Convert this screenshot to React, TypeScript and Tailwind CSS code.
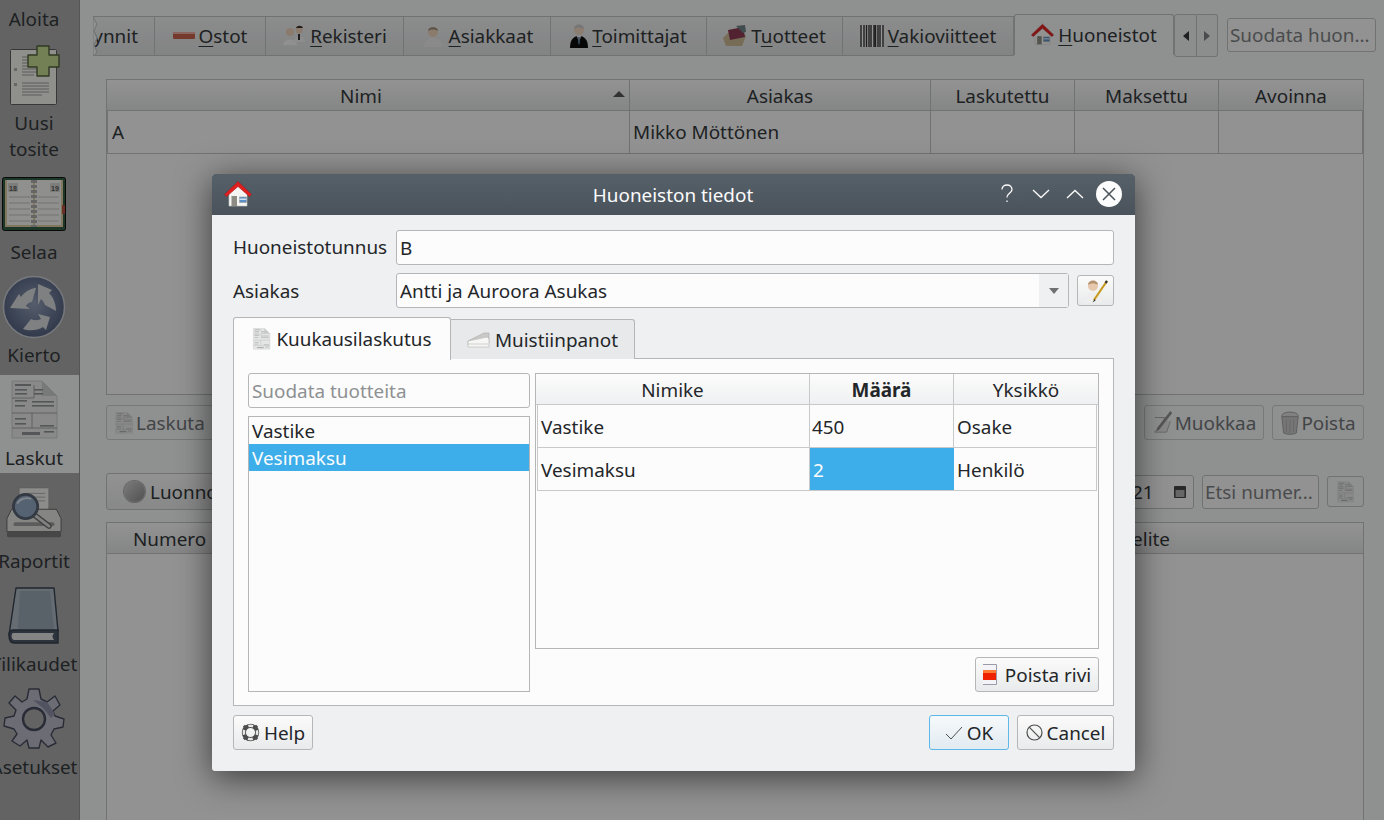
import type { ReactNode } from 'react';

const ink = 'text-[#232629]';

function HouseIcon({ size = 28 }: { size?: number }) {
  return (
    <svg width={size} height={size} viewBox="0 0 28 28">
      <path d="M5 13 V26 H23 V13 L14 5 Z" fill="#f4f4f2" stroke="#c9c9c5" strokeWidth="0.6" />
      <path d="M0.5 14.5 L14 1.5 L27.5 14.5 L25.5 16.5 L14 6.5 L2.5 16.5 Z" fill="#e02020" stroke="#a81414" strokeWidth="0.6" />
      <rect x="7.5" y="16" width="5.5" height="10" fill="#8c8c84" />
      <rect x="15.5" y="17" width="7" height="5.5" fill="#5b8fc4" stroke="#9a9a9a" strokeWidth="0.6" />
      <rect x="15.5" y="18.5" width="7" height="1.5" fill="#cfe0f2" />
    </svg>
  );
}

function InvoiceIcon({ w = 20, h = 24, c = '#8e9092' }: { w?: number; h?: number; c?: string }) {
  return (
    <svg width={w} height={h} viewBox="0 0 48 60">
      <path d="M2 1 H32 L47 16 V58 H2 Z" fill="#e4e5e5" stroke="#c8c8c8" strokeWidth="1" />
      <path d="M32 1 V16 H47 Z" fill="#c9caca" />
      <g fill={c}>
        <rect x="5" y="4" width="16" height="2" />
        <rect x="5" y="9" width="12" height="1.6" />
        <rect x="5" y="13" width="12" height="1.6" />
        <rect x="24" y="9" width="9" height="1.6" />
        <rect x="24" y="13" width="9" height="1.6" />
        <rect x="5" y="20" width="12" height="1.6" />
        <rect x="22" y="21" width="22" height="1.6" />
        <rect x="22" y="25" width="22" height="1.6" />
        <rect x="5" y="25" width="10" height="1.6" />
        <rect x="5" y="38" width="11" height="1.6" />
        <rect x="5" y="43" width="11" height="1.6" />
        <rect x="30" y="45" width="14" height="1.6" />
        <rect x="12" y="52" width="18" height="3" />
        <rect x="34" y="51" width="10" height="1.6" />
      </g>
      <path d="M2 33 H47 M2 48 H47 M22 33 V48 M24 5 V18 H2" fill="none" stroke={c} strokeWidth="0.8" />
    </svg>
  );
}

function NewDocIcon() {
  return (
    <svg width="50" height="60" viewBox="0 0 50 60">
      <rect x="0.5" y="4.5" width="46" height="55" rx="1" fill="#eeeeea" stroke="#5c5c5c" strokeWidth="1" />
      <g stroke="#9a9a9a" strokeWidth="1">
        <path d="M12 12 H18 M12 15 H18 M12 18 H18 M12 21 H18 M12 24 H30 M12 27 H30 M12 30 H24" />
        <path d="M12 38 H39 M12 41 H39 M12 44 H39 M12 47 H39 M12 50 H32" />
      </g>
      <rect x="4" y="23" width="3" height="3" fill="#aaa" />
      <rect x="4" y="38" width="3" height="3" fill="#aaa" />
      <path d="M27 1 H39 V10 H49 V22 H39 V31 H27 V22 H18 V10 H27 Z" fill="#c0d48e" stroke="#50603a" strokeWidth="1.4" strokeLinejoin="round" />
    </svg>
  );
}

function PlannerIcon() {
  return (
    <svg width="64" height="54" viewBox="0 0 64 54">
      <rect x="0.5" y="0.5" width="63" height="53" rx="2" fill="#2f5c44" stroke="#111" />
      <rect x="3" y="3" width="58" height="47" fill="#d8c79d" />
      <rect x="5" y="3" width="26" height="45" fill="#f0f0ee" />
      <rect x="33" y="3" width="26" height="45" fill="#eeeeec" />
      <rect x="6" y="6" width="10" height="9" fill="#d0d0ce" />
      <rect x="48" y="6" width="10" height="9" fill="#d0d0ce" />
      <text x="11" y="13.5" fontSize="7" textAnchor="middle" fill="#555" fontFamily="Liberation Sans" fontWeight="700">18</text>
      <text x="53" y="13.5" fontSize="7" textAnchor="middle" fill="#555" fontFamily="Liberation Sans" fontWeight="700">19</text>
      <g stroke="#c0c0be" strokeWidth="1">
        <path d="M7 20 H28 M7 26 H28 M7 32 H28 M7 38 H28 M7 44 H28 M36 20 H57 M36 26 H57 M36 32 H57 M36 38 H57 M36 44 H57" />
      </g>
      <path d="M32 3 V50" stroke="#aaa" strokeWidth="6" strokeDasharray="3 2" />
      <rect x="60" y="28" width="3" height="9" fill="#b05040" />
    </svg>
  );
}

function CycleIcon() {
  return (
    <svg width="64" height="64" viewBox="0 0 64 64">
      <defs>
        <radialGradient id="cy" cx="0.5" cy="0.45" r="0.6">
          <stop offset="0" stopColor="#8f9cb5" />
          <stop offset="1" stopColor="#4c5a78" />
        </radialGradient>
      </defs>
      <circle cx="32" cy="32" r="30.5" fill="url(#cy)" stroke="#c5c9d0" strokeWidth="1.5" />
      <g fill="#d4d6d8">
        <path d="M8 33 L17 19 L19 22 C24 15 31 13 34 13 L30 27 C27 27 25 29 24 31 L28 34 Z" />
        <path d="M36 9 L50 15 L47 18 C52 23 54 30 54 36 L43 30 C42 27 40 25 39 24 L36 30 Z" />
        <path d="M48 42 L44 55 L41 52 C35 56 27 56 21 54 L29 44 C33 46 37 45 39 44 L36 39 Z" />
      </g>
    </svg>
  );
}

function PrinterIcon() {
  return (
    <svg width="56" height="56" viewBox="0 0 60 56">
      <rect x="14" y="1" width="32" height="30" fill="#e9e9e7" stroke="#999" />
      <path d="M22 7 H42 M22 11 H42 M34 15 H42" stroke="#aaa" />
      <path d="M6 24 H54 L59 34 V48 H1 V34 Z" fill="#dededc" stroke="#5c5c5c" />
      <rect x="1" y="48" width="58" height="6" rx="2" fill="#777" />
      <rect x="8" y="38" width="44" height="4" rx="2" fill="#999" />
      <path d="M29 29 L46 42" stroke="#6b6b6b" strokeWidth="6" strokeLinecap="round" />
      <path d="M29 29 L46 42" stroke="#d8d8d8" strokeWidth="3" strokeLinecap="round" />
      <circle cx="21" cy="21" r="13" fill="#8ea3bf" stroke="#55606e" strokeWidth="3" />
      <path d="M12 18 C15 12 22 11 27 13" stroke="#d5dfea" strokeWidth="2" fill="none" />
    </svg>
  );
}

function BookIcon() {
  return (
    <svg width="52" height="58" viewBox="0 0 52 58">
      <path d="M8 1 H46 L50 44 H4 C2 44 1 46 1 48 Z" fill="#a9b4bf" stroke="#35404e" strokeWidth="1.4" strokeLinejoin="round" />
      <path d="M12 4 H42 L46 42 H10 Z" fill="#97a4b0" />
      <path d="M1 48 C1 44 3 43 6 43 H50 L50 56 H6 C3 56 1 53 1 48 Z" fill="#4a5566" stroke="#35404e" strokeWidth="1.4" />
      <path d="M5 46 H46 C44 49 44 50 46 53 H6 C3 52 3 47 5 46 Z" fill="#dcdcdc" />
    </svg>
  );
}

function GearIcon() {
  return (
    <svg width="62" height="62" viewBox="0 0 62 62">
      <path
        d="M26 1 H36 L38 11 L44 14 L52 8 L57 17 L50 23 L52 28 L61 31 L60 39 L51 41 L48 47 L53 55 L45 59 L38 52 L36 60 H26 L24 52 L17 58 L9 53 L14 46 L11 41 L1 38 L2 30 L11 28 L13 22 L6 15 L12 8 L19 14 L24 11 Z"
        fill="#b2b5c2"
        stroke="#45495a"
        strokeWidth="1.4"
        strokeLinejoin="round"
      />
      <circle cx="31" cy="31" r="11" fill="#a6a6a6" stroke="#45495a" strokeWidth="2.4" />
      <path d="M30 12 L40 20 L48 30 L52 26 L44 14 Z" fill="#878ba0" />
    </svg>
  );
}

function PersonIcon({ size = 24, suit = '#e6e6e6' }: { size?: number; suit?: string }) {
  return (
    <svg width={size} height={size} viewBox="0 0 24 24">
      <circle cx="12" cy="8" r="5" fill="#e6cdb6" />
      <path d="M7 7 C7 2 17 2 17 7 C15 5 9 5 7 7 Z" fill="#9a8a78" />
      <path d="M3 23 C3 16 8 14 12 14 C16 14 21 16 21 23 Z" fill={suit} />
    </svg>
  );
}

function TabIcon({ name }: { name: string }) {
  if (name === 'minus') {
    return (
      <svg width="22" height="8" viewBox="0 0 22 8">
        <rect x="0" y="0" width="22" height="7" rx="1" fill="#c4614c" />
        <rect x="0" y="0" width="22" height="2" fill="#e8aaa0" />
      </svg>
    );
  }
  if (name === 'people') {
    return (
      <svg width="24" height="22" viewBox="0 0 24 22">
        <circle cx="8" cy="7" r="4" fill="#e6cdb6" />
        <path d="M1 20 C1 13 15 13 15 20 Z" fill="#f0f0f0" />
        <circle cx="17" cy="5" r="3.5" fill="#e6cdb6" />
        <path d="M14 3 C15 0 20 0 21 3 Z" fill="#3a2f28" />
        <path d="M12 17 C12 10 23 10 23 17 Z" fill="#ececec" />
        <rect x="16" y="9" width="2" height="6" fill="#333" />
      </svg>
    );
  }
  if (name === 'person') return <PersonIcon size={24} />;
  if (name === 'suit') {
    return (
      <svg width="18" height="24" viewBox="0 0 18 24">
        <circle cx="9" cy="6" r="5" fill="#e8d0ba" />
        <path d="M4 5 C4 -1 14 -1 14 5 C12 3 6 3 4 5 Z" fill="#c5c5c5" />
        <path d="M0 24 C0 15 4 12 9 12 C14 12 18 15 18 24 Z" fill="#0c0c0c" />
        <path d="M7 12 L9 19 L11 12 Z" fill="#f0f0f0" />
        <path d="M8.4 13 H9.6 L10 19 L9 21 L8 19 Z" fill="#50708a" />
      </svg>
    );
  }
  if (name === 'books') {
    return (
      <svg width="24" height="22" viewBox="0 0 24 22">
        <path d="M0 13 L5 8 H20 L23 11 L19 21 H3 Z" fill="#c7b48f" />
        <path d="M5 5 L20 2 L22 12 L7 15 Z" fill="#8a3a52" />
        <path d="M13 1 L22 0 L23 7 L20 8 Z" fill="#6c7f80" />
      </svg>
    );
  }
  if (name === 'barcode') {
    return (
      <svg width="24" height="22" viewBox="0 0 24 22">
        <rect width="24" height="22" fill="#f6f6f6" />
        <path d="M1 0 V22 M4 0 V22 M6.5 0 V22 M9 0 V22 M11 0 V22 M14 0 V22 M15.5 0 V22 M18 0 V22 M20 0 V22 M23 0 V22" stroke="#333" strokeWidth="1.4" />
      </svg>
    );
  }
  return <HouseIcon size={23} />;
}

function Tab({ w, icon, pre, mn, post, active }: { w: number; icon?: string; pre?: string; mn: string; post: string; active?: boolean }) {
  return (
    <div
      style={{ width: w }}
      className={
        active
          ? 'flex h-[41px] -mt-[2px] items-center justify-center gap-[4px] rounded-t-[3px] border border-b-0 border-[#bcbebf] bg-[#eff0f1] pb-[1px]'
          : 'flex h-[40px] items-center justify-center gap-[4px] border-y border-r border-[#bcbebf] bg-gradient-to-b from-[#e9eaeb] to-[#dadbdc]'
      }
    >
      {icon && <TabIcon name={icon} />}
      <span className="text-[#33373a]">
        {pre}
        <span className="underline decoration-1 underline-offset-[3px]">{mn}</span>
        {post}
      </span>
    </div>
  );
}

function BackgroundHeader({ label, w, sorted }: { label: string; w: number; sorted?: boolean }) {
  return (
    <div style={{ width: w }} className={`relative flex h-full items-center justify-center border-r border-[#bcbebf] pt-[1px] last:border-r-0 ${sorted ? 'pr-[14px]' : ''}`}>
      <span className="text-[#33373a]">{label}</span>
      {sorted && <span className="absolute right-[4px] top-[11px] h-0 w-0 border-x-[6px] border-b-[6px] border-x-transparent border-b-[#555]" />}
    </div>
  );
}

function DisabledButton({ w, left, children }: { w: number; left?: boolean; children: ReactNode }) {
  return (
    <div
      style={{ width: w }}
      className={`flex h-[35px] items-center gap-[1px] rounded-[3px] border border-[#c8c9ca] bg-[#eff0f1] text-[#6f7376] ${left ? 'justify-start pl-[8px]' : 'justify-center'}`}
    >
      {children}
    </div>
  );
}

function SideItem({ label, icon, active, className }: { label: string; icon: ReactNode; active?: boolean; className: string }) {
  return (
    <div className={`w-full pt-[3px] ${className} ${active ? 'bg-[#eff0f1]' : ''}`}>
      <div className="flex w-[68px] flex-col items-center">
        <div className="flex h-[64px] items-center justify-center">{icon}</div>
        <div className="mt-[3px] flex w-[68px] justify-center whitespace-nowrap leading-[26px] text-[#33373a]">{label}</div>
      </div>
    </div>
  );
}

function Background() {
  return (
    <div className="flex h-full w-full">
      <aside className="flex h-full w-[80px] shrink-0 flex-col overflow-hidden border-r border-[#909090] bg-[#a6a6a6]">
        <div className="flex h-[38px] w-[68px] shrink-0 items-center justify-center leading-[26px] text-[#33373a]">Aloita</div>
        <div className="flex h-[131px] w-[68px] shrink-0 flex-col items-center">
          <div className="flex h-[72px] items-center justify-center pl-[1px] pt-[1px]">
            <NewDocIcon />
          </div>
          <div className="text-center leading-[26px] text-[#33373a]">
            Uusi
            <br />
            tosite
          </div>
        </div>
        <SideItem className="h-[103px] shrink-0" label="Selaa" icon={<PlannerIcon />} />
        <SideItem className="h-[103px] shrink-0" label="Kierto" icon={<CycleIcon />} />
        <SideItem className="h-[98px] shrink-0" label="Laskut" active icon={<InvoiceIcon w={48} h={60} />} />
        <SideItem className="mt-[5px] h-[103px] shrink-0" label="Raportit" icon={<PrinterIcon />} />
        <SideItem className="h-[103px] shrink-0" label="Tilikaudet" icon={<BookIcon />} />
        <SideItem className="h-[103px] shrink-0" label="Asetukset" icon={<GearIcon />} />
      </aside>

      <main className="flex min-w-0 flex-1 flex-col bg-[#eff0f1]">
        <div className="flex h-[79px] shrink-0 items-start pl-[13px] pt-[16px]">
          <div className="relative flex h-[40px] w-[62px] items-center justify-end overflow-hidden border-y border-r border-[#bcbebf] bg-gradient-to-b from-[#e9eaeb] to-[#dadbdc] pr-[16px] text-[#33373a]">
            ynnit
            <svg className="absolute left-0 top-0" width="5" height="40" viewBox="0 0 5 40" fill="#eff0f1" stroke="#bcbebf">
              <path d="M0 0 L4 7 L1 14 L4 21 L1 28 L4 35 L0 40 Z" />
            </svg>
          </div>
          <Tab w={111} icon="minus" mn="O" post="stot" />
          <Tab w={138} icon="people" mn="R" post="ekisteri" />
          <Tab w={147} icon="person" mn="A" post="siakkaat" />
          <Tab w={156} icon="suit" mn="T" post="oimittajat" />
          <Tab w={136} icon="books" pre="T" mn="u" post="otteet" />
          <Tab w={171} icon="barcode" mn="V" post="akioviitteet" />
          <Tab w={160} icon="house" mn="H" post="uoneistot" active />
          <div className="-mt-[2px] flex h-[43px]">
            <div className="flex w-[23px] items-center justify-center rounded-l-[3px] border border-[#bcbebf] bg-[#eaebec]">
              <span className="h-0 w-0 border-y-[5px] border-r-[6px] border-y-transparent border-r-[#33373a]" />
            </div>
            <div className="flex w-[21px] items-center justify-center rounded-r-[3px] border border-l-0 border-[#bcbebf] bg-[#eaebec]">
              <span className="h-0 w-0 border-y-[5px] border-l-[6px] border-y-transparent border-l-[#7c7e80]" />
            </div>
          </div>
          <div className="ml-[9px] mt-[2px] flex h-[34px] w-[149px] items-center overflow-hidden whitespace-nowrap rounded-[3px] border border-[#bcbebf] bg-[#f4f4f4] pl-[2px] text-[#7c7e80]">
            Suodata huon...
          </div>
        </div>

        <div className="ml-[26px] mr-[20px] flex h-[316px] shrink-0 flex-col border border-[#bcbebf] bg-[#f4f4f4]">
          <div className="flex h-[31px] shrink-0 border-b border-[#bcbebf] bg-gradient-to-b from-[#f5f5f5] to-[#dedfe0]">
            <BackgroundHeader label="Nimi" w={523} sorted />
            <BackgroundHeader label="Asiakas" w={301} />
            <BackgroundHeader label="Laskutettu" w={144} />
            <BackgroundHeader label="Maksettu" w={144} />
            <BackgroundHeader label="Avoinna" w={144} />
          </div>
          <div className="flex h-[43px] shrink-0 border-b border-[#bcbebf] text-[#33373a]">
            <div className="flex w-[523px] items-center border-x border-[#bcbebf] pl-[4px]">A</div>
            <div className="flex w-[301px] items-center border-r border-[#bcbebf] pl-[3px]">Mikko Möttönen</div>
            <div className="w-[144px] border-r border-[#bcbebf]" />
            <div className="w-[144px] border-r border-[#bcbebf]" />
            <div className="w-[144px] border-r border-[#bcbebf]" />
          </div>
        </div>

        <div className="ml-[26px] mr-[20px] mt-[10px] flex h-[35px] shrink-0 justify-between">
          <DisabledButton w={130} left>
            <InvoiceIcon w={18} h={22} c="#a8a8a8" />
            <span className="ml-[2px]">Laskuta</span>
          </DisabledButton>
          <div className="flex gap-[8px]">
            <DisabledButton w={120}>
              <svg width="22" height="24" viewBox="0 0 24 24" fill="none">
                <path d="M3 6 H15 L3 22 H16 L20 10" stroke="#aaa" fill="#e2e2e2" />
                <path d="M22 1 L8 19 L5 21 L6 17 L20 -1" fill="#8e8e8e" />
              </svg>
              Muokkaa
            </DisabledButton>
            <DisabledButton w={92}>
              <svg width="20" height="26" viewBox="0 0 22 26">
                <ellipse cx="11" cy="5" rx="9" ry="4" fill="#d8d8d8" stroke="#999" />
                <path d="M2 6 L4 24 C8 26 14 26 18 24 L20 6 Z" fill="#c5c5c5" stroke="#999" />
                <path d="M7 9 V23 M11 9 V24 M15 9 V23" stroke="#aaa" />
              </svg>
              Poista
            </DisabledButton>
          </div>
        </div>

        <div className="ml-[26px] mr-[20px] mt-[33px] flex h-[37px] shrink-0 items-center justify-between">
          <div className="flex h-[37px] w-[200px] items-center gap-[5px] whitespace-nowrap rounded-[3px] border border-[#bcbebf] bg-gradient-to-b from-[#f4f4f4] to-[#e2e3e4] pl-[17px] text-[#33373a]">
            <span className="h-[21px] w-[21px] rounded-full bg-gradient-to-br from-[#cfcfcf] to-[#888] ring-1 ring-[#aaa]" />
            Luonnokset
          </div>
          <div className="flex items-center gap-[8px]">
            <div className="flex h-[34px] w-[140px] items-center justify-between rounded-[3px] border border-[#bcbebf] bg-[#f4f4f4] pl-[2px] pr-[3px] text-[#33373a]">
              31.12.2021
              <svg width="14" height="14" viewBox="0 0 14 14" className="mr-[3px]">
                <rect x="1" y="1" width="12" height="12" rx="1" fill="#444" />
                <rect x="2.5" y="5" width="9" height="7" fill="#aaa" />
              </svg>
            </div>
            <div className="flex h-[34px] w-[117px] items-center overflow-hidden whitespace-nowrap rounded-[3px] border border-[#bcbebf] bg-[#f4f4f4] pl-[2px] text-[#7c7e80]">Etsi numer...</div>
            <div className="flex h-[31px] w-[37px] items-center justify-center rounded-[3px] border border-[#bcbebf] bg-[#eff0f1]">
              <InvoiceIcon w={17} h={22} c="#a8a8a8" />
            </div>
          </div>
        </div>

        <div className="ml-[26px] mr-[20px] mt-[12px] min-h-0 flex-1 border-x border-t border-[#bcbebf] bg-[#f4f4f4]">
          <div className="flex h-[31px] items-center justify-between border-b border-[#bcbebf] bg-gradient-to-b from-[#f5f5f5] to-[#dedfe0] pt-[1px] text-[#33373a]">
            <span className="pl-[26px]">Numero</span>
            <span className="pr-[193px]">Selite</span>
          </div>
        </div>
      </main>
    </div>
  );
}

function Field({ value, placeholder, className }: { value?: string; placeholder?: string; className: string }) {
  return (
    <div className={`flex items-center rounded-[3px] border border-[#b4b6b7] bg-[#fcfcfc] pl-[3px] ${className}`}>
      {value ? <span className={ink}>{value}</span> : <span className="text-[#8e9092]">{placeholder}</span>}
    </div>
  );
}

function PushButton({ className, children }: { className: string; children: ReactNode }) {
  return (
    <div className={`flex h-[35px] items-center justify-center rounded-[3px] border border-[#b4b6b7] bg-gradient-to-b from-[#fbfbfb] to-[#e9eaeb] ${ink} ${className}`}>
      {children}
    </div>
  );
}

function HeadCell({ label, w, bold }: { label: string; w: number; bold?: boolean }) {
  return (
    <div style={{ width: w }} className={`flex h-full items-center justify-center border-r border-[#c8c9ca] pt-[1px] last:border-r-0 ${bold ? 'font-bold' : ''}`}>
      {label}
    </div>
  );
}

function Dialog() {
  return (
    <div className={`absolute left-[212px] top-[174px] flex h-[597px] w-[923px] flex-col rounded-[3px] bg-[#eff0f1] shadow-[0_6px_34px_rgba(0,0,0,0.6)] ${ink}`}>
      <div className="relative flex h-[41px] shrink-0 items-center justify-center rounded-t-[3px] bg-gradient-to-b from-[#566069] to-[#4a535b] text-[#fcfcfc]">
        <div className="absolute left-[12px] top-[6px]">
          <HouseIcon />
        </div>
        <span className="-ml-[1px]">Huoneiston tiedot</span>
        <div className="absolute left-[788px] top-[6px] flex h-[28px] items-center">
          <svg width="14" height="20" viewBox="0 0 14 20" fill="none" stroke="#fcfcfc" strokeWidth="1.3">
            <path d="M2 5.5 C2 2.5 4.5 1 7 1 C10 1 12 3 12 5.5 C12 9 7 9 7 13.5" />
            <path d="M7 16.5 V18" />
          </svg>
          <svg className="ml-[16px]" width="22" height="12" viewBox="0 0 22 12" fill="none" stroke="#fcfcfc" strokeWidth="1.3">
            <path d="M3 2 L11 9.5 L19 2" />
          </svg>
          <svg className="ml-[12px]" width="22" height="12" viewBox="0 0 22 12" fill="none" stroke="#fcfcfc" strokeWidth="1.3">
            <path d="M3 10 L11 2.5 L19 10" />
          </svg>
        </div>
        <div className="absolute left-[884px] top-[7px] flex h-[26px] w-[26px] items-center justify-center rounded-full bg-[#fcfcfc]">
          <svg width="16" height="16" viewBox="0 0 16 16" fill="none" stroke="#4a535b" strokeWidth="1.5">
            <path d="M2 2 L14 14 M14 2 L2 14" />
          </svg>
        </div>
      </div>

      <div className="flex min-h-0 flex-1 flex-col px-[21px] pt-[15px]">
        <div className="flex h-[35px] shrink-0 items-center">
          <div className="w-[163px] shrink-0 -translate-y-[1px]">Huoneistotunnus</div>
          <Field value="B" className="h-[35px] flex-1" />
        </div>
        <div className="mt-[8px] flex h-[35px] shrink-0 items-center">
          <div className="w-[163px] shrink-0">Asiakas</div>
          <div className="flex h-[35px] w-[673px] items-center justify-between rounded-[3px] border border-[#b4b6b7] bg-[#fcfcfc] pl-[3px]">
            Antti ja Auroora Asukas
            <div className="flex h-full w-[29px] items-center justify-center bg-[#eff0f1]">
              <span className="h-0 w-0 border-x-[5px] border-t-[6px] border-x-transparent border-t-[#6e7173]" />
            </div>
          </div>
          <PushButton className="ml-[8px] !h-[31px] w-[37px]">
            <svg width="26" height="26" viewBox="0 0 26 26">
              <circle cx="10" cy="8" r="5" fill="#e6c8ac" />
              <path d="M5 7 C5 1 15 1 15 7 C13 5 7 5 5 7 Z" fill="#b5936e" />
              <path d="M2 25 C2 17 7 14 11 14 C15 14 19 17 19 25 Z" fill="#eeeeee" />
              <path d="M24 3 L11 22" stroke="#c79a1e" strokeWidth="2.2" />
              <path d="M24 3 L22.5 5" stroke="#333" strokeWidth="2.2" />
              <path d="M11.6 21 L9.5 24.5 L12.6 22.4" fill="#333" />
            </svg>
          </PushButton>
        </div>

        <div className="mt-[8px] flex h-[43px] shrink-0 items-end">
          <div className="relative z-10 -mb-px flex h-[43px] w-[218px] items-center justify-center gap-[5px] rounded-t-[3px] border border-b-0 border-[#b4b6b7] bg-[#fcfcfc] pb-[1px]">
            <InvoiceIcon w={19} h={22} c="#a9abac" />
            Kuukausilaskutus
          </div>
          <div className="flex h-[40px] w-[184px] items-center justify-center gap-[5px] rounded-tr-[3px] border-r border-t border-[#b4b6b7] bg-[#e8e9ea]">
            <svg width="23" height="18" viewBox="0 0 23 18">
              <path d="M1 10 L17 2 H22 L22 12 L1 14 Z" fill="#c9c9c7" stroke="#a9a9a7" strokeWidth="0.6" />
              <path d="M1 10 L20 6 L22 8 V16 H1 Z" fill="#f6f6f4" stroke="#b5b5b3" strokeWidth="0.6" />
              <path d="M1 13 H22" stroke="#d0d0ce" strokeWidth="1" />
            </svg>
            Muistiinpanot
          </div>
          <div className="flex-1 border-b border-[#b4b6b7]" />
        </div>

        <div className="flex h-[347px] shrink-0 gap-[5px] border-x border-b border-[#b4b6b7] bg-[#fcfcfc] pl-[14px] pr-[14px] pt-[14px]">
          <div className="flex w-[282px] shrink-0 flex-col">
            <Field placeholder="Suodata tuotteita" className="h-[35px] shrink-0" />
            <div className="mt-[8px] h-[276px] border border-[#b4b6b7]">
              <div className="flex h-[27px] items-center pl-[3px]">Vastike</div>
              <div className="flex h-[27px] items-center bg-[#3daee9] pl-[3px] text-[#fcfcfc]">Vesimaksu</div>
            </div>
          </div>
          <div className="flex min-w-0 flex-1 flex-col">
            <div className="h-[276px] shrink-0 border border-[#b4b6b7]">
              <div className="flex h-[31px] border-b border-[#c8c9ca] bg-gradient-to-b from-[#fcfcfc] to-[#eff0f1]">
                <HeadCell label="Nimike" w={274} />
                <HeadCell label="Määrä" w={144} bold />
                <HeadCell label="Yksikkö" w={144} />
              </div>
              <div className="ml-[1px] mr-[1px] flex h-[43px] border-x border-b border-[#c8c9ca]">
                <div className="flex w-[272px] items-center border-r border-[#c8c9ca] pl-[3px] pt-[1px]">Vastike</div>
                <div className="flex w-[144px] items-center border-r border-[#c8c9ca] pl-[2px] pt-[1px]">450</div>
                <div className="flex flex-1 items-center pl-[3px] pt-[1px]">Osake</div>
              </div>
              <div className="ml-[1px] mr-[1px] flex h-[43px] border-x border-b border-[#c8c9ca]">
                <div className="flex w-[272px] items-center border-r border-[#c8c9ca] pl-[3px] pt-[1px]">Vesimaksu</div>
                <div className="flex w-[144px] items-center bg-[#3daee9] pl-[3px] pt-[1px] text-[#fcfcfc]">2</div>
                <div className="flex flex-1 items-center pl-[3px] pt-[1px]">Henkilö</div>
              </div>
            </div>
            <div className="mt-[8px] flex justify-end">
              <PushButton className="w-[124px] gap-[8px]">
                <svg width="14" height="21" viewBox="0 0 14 21">
                  <path d="M0 0.5 H13.5 V20.5 H0" fill="#f4f4f8" stroke="#9a9aaa" />
                  <rect x="0" y="6" width="13" height="10" fill="#ee2200" />
                  <rect x="0" y="6" width="13" height="3" fill="#ff7a33" />
                </svg>
                Poista rivi
              </PushButton>
            </div>
          </div>
        </div>

        <div className="mt-[9px] flex shrink-0 justify-between">
          <PushButton className="w-[80px] gap-[4px]">
            <svg width="19" height="19" viewBox="0 0 20 20" fill="none">
              <circle cx="10" cy="10" r="7" stroke="#4d4d4d" strokeWidth="4.4" />
              <circle cx="10" cy="10" r="7" stroke="#e8e8e8" strokeWidth="2.6" strokeDasharray="5 6" strokeDashoffset="2.5" />
              <path d="M3 3 L5 5 M17 3 L15 5 M3 17 L5 15 M17 17 L15 15" stroke="#4d4d4d" strokeWidth="3" />
            </svg>
            Help
          </PushButton>
          <div className="flex gap-[8px]">
            <div className="flex h-[35px] w-[80px] items-center justify-center gap-[4px] rounded-[3px] border border-[#5db7e8] bg-gradient-to-b from-[#f6f9fb] to-[#e2ebf1]">
              <svg width="18" height="14" viewBox="0 0 18 14" fill="none" stroke="#4d4d4d" strokeWidth="1">
                <path d="M1 8 L6 13 L17 1" />
              </svg>
              OK
            </div>
            <PushButton className="w-[97px] gap-[4px]">
              <svg width="17" height="17" viewBox="0 0 17 17" fill="none" stroke="#4d4d4d" strokeWidth="1.2">
                <circle cx="8.5" cy="8.5" r="7.5" />
                <path d="M3.2 3.2 L13.8 13.8" />
              </svg>
              Cancel
            </PushButton>
          </div>
        </div>
      </div>
    </div>
  );
}

export default function App() {
  return (
    <div className="relative h-[820px] w-[1384px] overflow-hidden font-['Noto_Sans',sans-serif] text-[18.9px] leading-[26px]">
      <Background />
      <div className="absolute inset-0 bg-black/40" />
      <Dialog />
    </div>
  );
}
